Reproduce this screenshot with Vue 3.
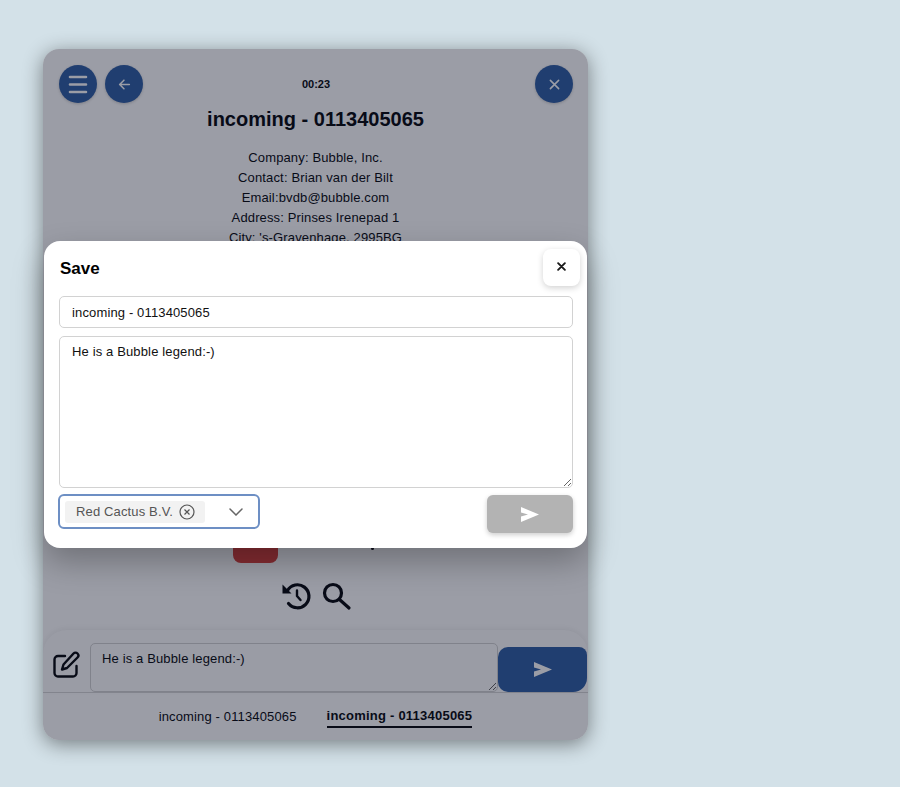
<template>
  <div class="page">
    <div class="card">
      <header class="top">
        <button class="round">
          <svg width="20" height="20" viewBox="0 0 20 20" fill="none" stroke="currentColor" stroke-width="2.600" stroke-linecap="round">
            <path d="M2 3h16M2 10.500h16M2 18h16" />
          </svg>
        </button>
        <button class="round">
          <svg width="13" height="13" viewBox="0 0 24 24" fill="none" stroke="currentColor" stroke-width="2.800" stroke-linecap="round" stroke-linejoin="round">
            <path d="M21 12H4M11 4l-8 8 8 8" />
          </svg>
        </button>
        <span class="timer">00:23</span>
        <button class="round">
          <svg width="11" height="11" viewBox="0 0 24 24" fill="none" stroke="currentColor" stroke-width="3.400" stroke-linecap="round">
            <path d="M3 3l18 18M21 3L3 21" />
          </svg>
        </button>
      </header>

      <main class="body">
        <h1 class="title">{{ callName }}</h1>
        <div class="details">
          <div v-for="line in details" :key="line">{{ line }}</div>
        </div>
        <div class="actions">
          <button class="hangup"></button>
          <span class="dot"></span>
        </div>
        <div class="tools">
          <svg width="30" height="30" viewBox="0 0 30 30" fill="none" stroke="#0b0d12" stroke-width="3.200" stroke-linecap="round" stroke-linejoin="round">
            <path d="M5.500 9.500A11.500 11.500 0 1 1 6.500 22.500" />
            <path d="M15 9.500V15l3.500 4" stroke-width="2.400" />
            <path d="M0.500 3.500v9h9z" fill="#0b0d12" stroke="none" />
          </svg>
          <svg width="30" height="30" viewBox="0 0 30 30" fill="none" stroke="#0b0d12" stroke-width="3.200" stroke-linecap="round">
            <circle cx="11" cy="12" r="8.500" />
            <path d="M17.500 18.500L27 27" />
          </svg>
        </div>
      </main>

      <section class="composer">
        <svg class="edit" width="27" height="27" viewBox="0 0 27 27" fill="none" stroke="#0b0d12" stroke-width="2.400" stroke-linecap="round" stroke-linejoin="round">
          <path d="M12 5H5a3.500 3.500 0 0 0-3.500 3.500v13.500a3.500 3.500 0 0 0 3.500 3.500h15a3.500 3.500 0 0 0 3.500-3.500v-7" />
          <path d="M20.500 2.500a2.800 2.800 0 0 1 4 4L14 17l-5 1.500 1.500-5z" />
        </svg>
        <textarea class="note" readonly :value="noteText"></textarea>
        <button class="send">
          <svg width="18" height="15" viewBox="0 0 18 15" fill="currentColor">
            <path d="M0 0l18 7.500L0 15V9.500l7-2-7-2z" />
          </svg>
        </button>
      </section>

      <nav class="tabs">
        <span class="tab">{{ callName }}</span>
        <span class="tab active">{{ callName }}</span>
      </nav>

      <div class="scrim"></div>

      <div class="modal">
        <div class="modal-head">
          <span class="modal-title">Save</span>
          <button class="modal-close">
            <svg width="9" height="9" viewBox="0 0 24 24" fill="none" stroke="#1a1a1a" stroke-width="5" stroke-linecap="round">
              <path d="M3 3l18 18M21 3L3 21" />
            </svg>
          </button>
        </div>
        <input class="field" readonly :value="callName" />
        <textarea class="field area" readonly :value="noteText"></textarea>
        <div class="modal-foot">
          <div class="select">
            <span class="chip">
              Red Cactus B.V.
              <svg width="16" height="16" viewBox="0 0 16 16" fill="none" stroke="#555" stroke-width="1.200">
                <circle cx="8" cy="8" r="7" />
                <path d="M5.500 5.500l5 5M10.500 5.500l-5 5" />
              </svg>
            </span>
            <svg class="chev" width="14" height="8" viewBox="0 0 14 8" fill="none" stroke="#666" stroke-width="1.500" stroke-linecap="round">
              <path d="M1 1l6 6 6-6" />
            </svg>
          </div>
          <button class="modal-send">
            <svg width="18" height="15" viewBox="0 0 18 15" fill="#fff">
              <path d="M0 0l18 7.500L0 15V9.500l7-2-7-2z" />
            </svg>
          </button>
        </div>
      </div>
    </div>
  </div>
</template>

<script setup>
const callName = 'incoming - 0113405065'
const noteText = 'He is a Bubble legend:-)'
const details = [
  'Company: Bubble, Inc.',
  'Contact: Brian van der Bilt',
  'Email:bvdb@bubble.com',
  'Address: Prinses Irenepad 1',
  "City: 's-Gravenhage, 2995BG"
]
</script>

<style>
html,
body {
  margin: 0;
  background: #d3e1e8;
}
</style>

<style scoped>
.page {
  height: 787px;
  padding: 49px 0 0 43px;
  box-sizing: border-box;
  font-family: "Liberation Sans", Arial, sans-serif;
  color: #0b0d12;
  overflow: hidden;
}

button {
  border: none;
  padding: 0;
  display: flex;
  align-items: center;
  justify-content: center;
}

.card {
  position: relative;
  width: 545px;
  height: 691px;
  display: flex;
  flex-direction: column;
  background: #fff;
  border-radius: 16px;
  box-shadow: 0 4px 20px rgba(0, 0, 0, 0.45);
}

.top {
  display: flex;
  align-items: center;
  gap: 8px;
  padding: 16px 15px 0 16px;
}

.round {
  width: 38px;
  height: 38px;
  border-radius: 50%;
  background: #3261a5;
  color: #fff;
  box-shadow: 0 1px 3px rgba(0, 0, 0, 0.2);
}

.timer {
  flex: 1;
  text-align: center;
  font-size: 11px;
  font-weight: 700;
  padding-right: 46px;
}

.body {
  flex: 1;
  display: flex;
  flex-direction: column;
  align-items: center;
}

.title {
  margin: 5px 0 0;
  font-size: 20px;
  line-height: 22px;
  font-weight: 700;
}

.details {
  margin-top: 18px;
  font-size: 13px;
  line-height: 20.100px;
  letter-spacing: 0.14px;
  text-align: center;
}

.actions {
  margin-top: 275px;
  margin-left: -24px;
  height: 40px;
  display: flex;
  align-items: flex-end;
  gap: 93px;
}

.hangup {
  width: 45px;
  height: 40px;
  background: #da433e;
  border-radius: 8px;
}

.dot {
  width: 3px;
  height: 3px;
  margin-bottom: 13px;
  border-radius: 50%;
  background: #0b0d12;
}

.tools {
  margin-top: 18px;
  margin-left: 3px;
  display: flex;
  gap: 10px;
}

.composer {
  display: flex;
  align-items: flex-end;
  height: 62px;
  background: #fdfdfd;
  border-radius: 24px 24px 0 0;
  border-bottom: 1px solid #d6d6d6;
  box-shadow: 0 -2px 5px rgba(0, 0, 0, 0.05);
}

.edit {
  margin: 0 10px 14px 10px;
}

.note {
  width: 408px;
  height: 49px;
  box-sizing: border-box;
  padding: 7px 11px;
  font: 13px/1.2 "Liberation Sans", Arial, sans-serif;
  letter-spacing: 0.14px;
  color: #0b0d12;
  background: transparent;
  border: 1px solid #d2d2d2;
  border-radius: 5px;
  outline: none;
}

.send {
  width: 89px;
  height: 45px;
  background: #3261a5;
  color: #fff;
  border-radius: 10px 8px 14px 10px;
}

.tabs {
  height: 47px;
  display: flex;
  justify-content: center;
  gap: 30px;
  padding-top: 15px;
  box-sizing: border-box;
  font-size: 13px;
  letter-spacing: 0.14px;
}

.tab {
  height: 18px;
  line-height: 15px;
}

.tab:first-child {
  margin-top: 1px;
}

.tab.active {
  font-weight: 700;
  letter-spacing: 0.23px;
  border-bottom: 2px solid #0b0d12;
}

.scrim {
  position: absolute;
  inset: 0;
  border-radius: 16px;
  background: rgba(5, 10, 32, 0.4);
}

.modal {
  position: absolute;
  left: 1px;
  right: 1px;
  top: 192px;
  height: 307px;
  box-sizing: border-box;
  padding: 8px 14px 0 15px;
  background: #fff;
  border-radius: 16px;
  box-shadow: 0 14px 32px rgba(0, 0, 0, 0.28);
}

.modal-head {
  display: flex;
  align-items: center;
  justify-content: space-between;
  height: 37px;
  margin-right: -7px;
}

.modal-title {
  font-size: 17px;
  font-weight: 700;
  color: #000;
  margin: 3px 0 0 1px;
}

.modal-close {
  width: 37px;
  height: 37px;
  padding-bottom: 3px;
  background: #fff;
  border-radius: 8px;
  box-shadow: 0 2px 6px rgba(0, 0, 0, 0.18);
}

.field {
  display: block;
  width: 100%;
  box-sizing: border-box;
  height: 32px;
  margin-top: 10px;
  padding: 0 12px;
  font: 13px "Liberation Sans", Arial, sans-serif;
  letter-spacing: 0.14px;
  color: #111;
  background: #fff;
  border: 1px solid #d2d2d2;
  border-radius: 5px;
  outline: none;
}

.area {
  height: 152px;
  margin-top: 8px;
  padding: 7px 12px;
}

.modal-foot {
  display: flex;
  justify-content: space-between;
  align-items: flex-start;
  margin-top: 6px;
}

.select {
  width: 202px;
  height: 35px;
  box-sizing: border-box;
  display: flex;
  align-items: center;
  justify-content: space-between;
  margin-left: -1px;
  padding: 0 15px 0 5px;
  border: 2px solid #6d8fc4;
  border-radius: 6px;
}

.chip {
  display: flex;
  align-items: center;
  gap: 6px;
  width: 140px;
  height: 22px;
  box-sizing: border-box;
  padding-left: 11px;
  font-size: 13px;
  letter-spacing: 0.14px;
  color: #555;
  background: #f2f2f2;
  border-radius: 3px;
}

.modal-send {
  width: 86px;
  height: 38px;
  margin-top: 1px;
  background: #b3b3b3;
  border-radius: 6px;
  box-shadow: 0 2px 5px rgba(0, 0, 0, 0.2);
}
</style>
